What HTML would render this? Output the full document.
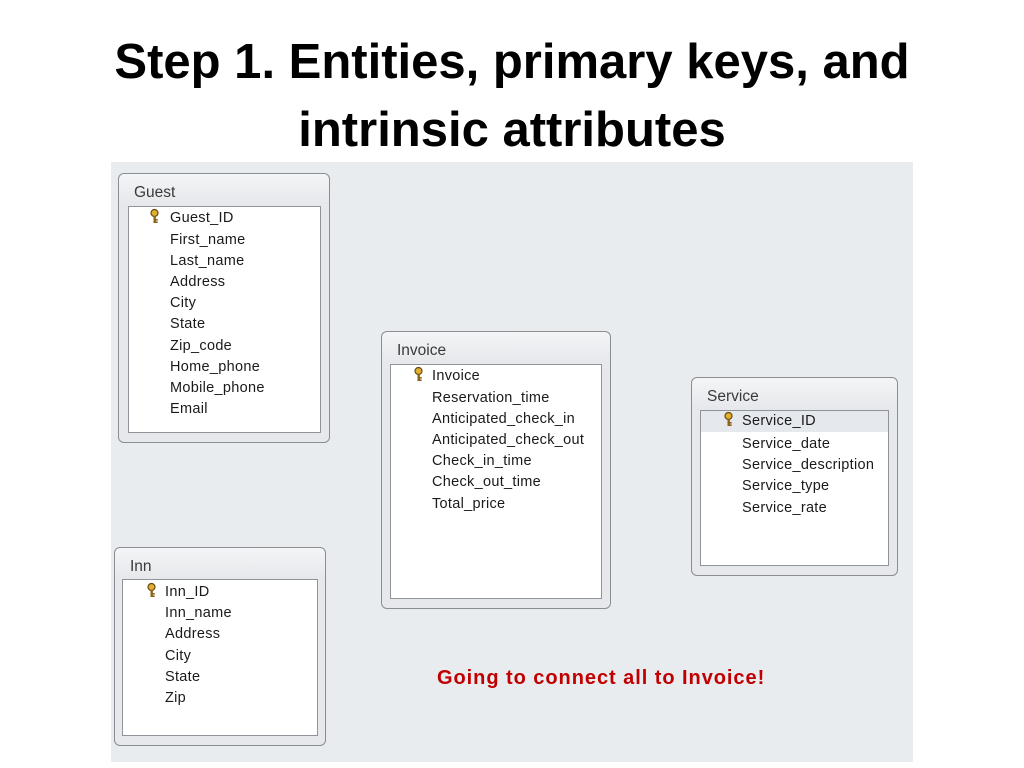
<!DOCTYPE html>
<html><head><style>
*{margin:0;padding:0;box-sizing:border-box}
body{width:1024px;height:768px;background:#fff;position:relative;overflow:hidden;font-family:"Liberation Sans",sans-serif}
.title{position:absolute;left:0;width:1024px;text-align:center;font-weight:bold;font-size:49px;line-height:56px;color:#000}
.panel{position:absolute;left:111px;top:162px;width:802px;height:600px;background:#e9ecef}
.tbl{position:absolute;border:1px solid #8a8d91;border-radius:6px;background:linear-gradient(#f4f5f7,#e6e8eb 30px,#e6e8eb)}
.tbl .h{position:absolute;left:0;top:0;font-size:15.5px;color:#3a3a3a;padding-left:15px;padding-top:10px}
.list{position:absolute;background:#fff;border:1px solid #8f949a}
.row{position:absolute;font-size:14.5px;letter-spacing:0.3px;color:#1a1a1a;height:21px;line-height:21px;white-space:nowrap;margin-top:2px}
.red{position:absolute;left:437px;top:667px;font-weight:bold;font-size:20px;letter-spacing:0.95px;color:#c00000}
</style></head><body>
<div class="title" style="top:34px">Step 1. Entities, primary keys, and</div>
<div class="title" style="top:102px">intrinsic attributes</div>
<div class="panel"></div>

<div class="tbl" style="left:118px;top:173px;width:212px;height:270px"><div class="h">Guest</div></div>
<div class="list" style="left:128px;top:206px;width:193px;height:227px"></div>

<div class="tbl" style="left:381px;top:331px;width:230px;height:278px"><div class="h">Invoice</div></div>
<div class="list" style="left:390px;top:364px;width:212px;height:235px"></div>

<div class="tbl" style="left:691px;top:377px;width:207px;height:199px"><div class="h">Service</div></div>
<div class="list" style="left:700px;top:410px;width:189px;height:156px"></div>
<div style="position:absolute;left:701px;top:411px;width:187px;height:21px;background:#e5e8ec"></div>

<div class="tbl" style="left:114px;top:547px;width:212px;height:199px"><div class="h">Inn</div></div>
<div class="list" style="left:122px;top:579px;width:196px;height:157px"></div>

<div class="row" style="left:170px;top:206px">Guest_ID</div>
<div class="row" style="left:170px;top:228px">First_name</div>
<div class="row" style="left:170px;top:249px">Last_name</div>
<div class="row" style="left:170px;top:270px">Address</div>
<div class="row" style="left:170px;top:291px">City</div>
<div class="row" style="left:170px;top:312px">State</div>
<div class="row" style="left:170px;top:334px">Zip_code</div>
<div class="row" style="left:170px;top:355px">Home_phone</div>
<div class="row" style="left:170px;top:376px">Mobile_phone</div>
<div class="row" style="left:170px;top:397px">Email</div>

<div class="row" style="left:432px;top:364px">Invoice</div>
<div class="row" style="left:432px;top:386px">Reservation_time</div>
<div class="row" style="left:432px;top:407px">Anticipated_check_in</div>
<div class="row" style="left:432px;top:428px">Anticipated_check_out</div>
<div class="row" style="left:432px;top:449px">Check_in_time</div>
<div class="row" style="left:432px;top:470px">Check_out_time</div>
<div class="row" style="left:432px;top:492px">Total_price</div>

<div class="row" style="left:742px;top:411px;margin-top:0">Service_ID</div>
<div class="row" style="left:742px;top:432px">Service_date</div>
<div class="row" style="left:742px;top:453px">Service_description</div>
<div class="row" style="left:742px;top:474px">Service_type</div>
<div class="row" style="left:742px;top:496px">Service_rate</div>

<div class="row" style="left:165px;top:580px">Inn_ID</div>
<div class="row" style="left:165px;top:601px">Inn_name</div>
<div class="row" style="left:165px;top:622px">Address</div>
<div class="row" style="left:165px;top:644px">City</div>
<div class="row" style="left:165px;top:665px">State</div>
<div class="row" style="left:165px;top:686px">Zip</div>

<svg style="position:absolute;left:0;top:0" width="1024" height="768">
<defs><g id="k"><circle cx="4.5" cy="4" r="3.5" fill="#e0b030" stroke="#6a4a10" stroke-width="1.2"/><rect x="3.5" y="7" width="2.4" height="7" fill="#8a6418"/><rect x="5.5" y="10" width="2.2" height="1.6" fill="#8a6418"/><rect x="5.5" y="12.4" width="2.2" height="1.6" fill="#8a6418"/></g></defs>
<use href="#k" x="150" y="209"/>
<use href="#k" x="414" y="367"/>
<use href="#k" x="724" y="412"/>
<use href="#k" x="147" y="583"/>
</svg>

<div class="red">Going to connect all to Invoice!</div>
</body></html>
